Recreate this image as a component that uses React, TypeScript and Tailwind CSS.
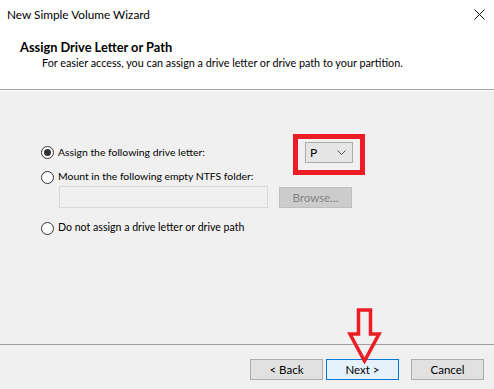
const FONT = "font-['Lato','Liberation_Sans',sans-serif]";

function Radio({ checked }: { checked?: boolean }) {
  return (
    <span className="flex h-[13px] w-[13px] flex-none items-center justify-center rounded-full border border-[#333333] bg-white">
      {checked && <span className="h-[7px] w-[7px] rounded-full bg-[#333333]" />}
    </span>
  );
}

function Button({ label, focused }: { label: string; focused?: boolean }) {
  return (
    <div
      className={`flex h-[21px] w-[73px] items-center justify-center border text-[11.5px] text-black ${
        focused ? "border-[#0078d7] bg-[#e5f1fb]" : "border-[#adadad] bg-[#e1e1e1]"
      }`}
    >
      {label}
    </div>
  );
}

export default function App() {
  return (
    <div className={`relative flex h-[389px] w-[494px] flex-col bg-[#f0f0f0] text-[10.6px] text-black ${FONT}`}>
      {/* header */}
      <div className="flex h-[90px] flex-none flex-col border-b border-[#a0a0a0] bg-white">
        <div className="flex h-[29px] items-center justify-between pl-[7px] pr-[9px]">
          <span className="text-[11.8px]">New Simple Volume Wizard</span>
          <svg width="11" height="11" viewBox="0 0 11 11" className="mt-[-1px]">
            <path d="M0.5 0.5 L10.5 10.5 M10.5 0.5 L0.5 10.5" stroke="#111" strokeWidth="1" />
          </svg>
        </div>
        <div className="pl-[20px] pt-[10px] text-[12.8px] font-bold leading-[16px]">Assign Drive Letter or Path</div>
        <div className="pl-[42px] text-[10.8px] leading-[16px]">
          For easier access, you can assign a drive letter or drive path to your partition.
        </div>
      </div>
      <div className="h-px bg-white" />

      {/* body */}
      <div className="flex flex-1 flex-col pl-[41px] pt-[51px] text-[11px]">
        <div className="flex h-[21px] items-center">
          <div className="flex w-[264px] items-center gap-[4px]">
            <Radio checked />
            <span className="text-[10.4px]">Assign the following drive letter:</span>
          </div>
          <div className="relative">
            <div className="flex h-[21px] w-[48px] items-center justify-between border border-[#acacac] bg-[#e5e5e5] pl-[4px] pr-[6px]">
              <span className="text-[12px]">P</span>
              <svg width="9" height="5" viewBox="0 0 9 5">
                <path d="M0.5 0.5 L4.5 4.5 L8.5 0.5" fill="none" stroke="#555" strokeWidth="1" />
              </svg>
            </div>
            <div className="pointer-events-none absolute left-[-12px] right-[-12px] top-[-8px] bottom-[-12px] border-[5px] border-[#ed1c24]" />
          </div>
        </div>
        <div className="mt-[6px] flex h-[16px] items-center gap-[4px]">
          <Radio />
          <span className="text-[10.4px]">Mount in the following empty NTFS folder:</span>
        </div>
        <div className="ml-[18px] mt-[1px] flex items-start gap-[11px]">
          <div className="h-[22px] w-[209px] border border-[#d9d9d9] bg-[#f0f0f0]" />
          <div className="mt-[1px] flex h-[21px] w-[73px] items-center justify-center border border-[#bfbfbf] bg-[#cccccc] text-[11.5px] text-[#838383]">
            Browse...
          </div>
        </div>
        <div className="mt-[12px] flex h-[16px] items-center gap-[4px]">
          <Radio />
          <span className="text-[10.6px]">Do not assign a drive letter or drive path</span>
        </div>
      </div>

      {/* footer */}
      <div className="flex h-[45px] flex-none items-start justify-end border-t border-[#a0a0a0] pr-[10px] pt-[14px]">
        <div className="flex gap-[3px]">
          <Button label="< Back" />
          <Button label="Next >" focused />
        </div>
        <div className="ml-[12px]">
          <Button label="Cancel" />
        </div>
      </div>

      {/* annotation arrow */}
      <svg className="absolute left-[347px] top-[308px]" width="35" height="56" viewBox="0 0 35 56">
        <polygon
          points="11.5,2 23.5,2 23.5,26 32,26 17.5,53 3,26 11.5,26"
          fill="none"
          stroke="#ed1c24"
          strokeWidth="3.5"
          strokeLinejoin="miter"
        />
      </svg>
    </div>
  );
}
